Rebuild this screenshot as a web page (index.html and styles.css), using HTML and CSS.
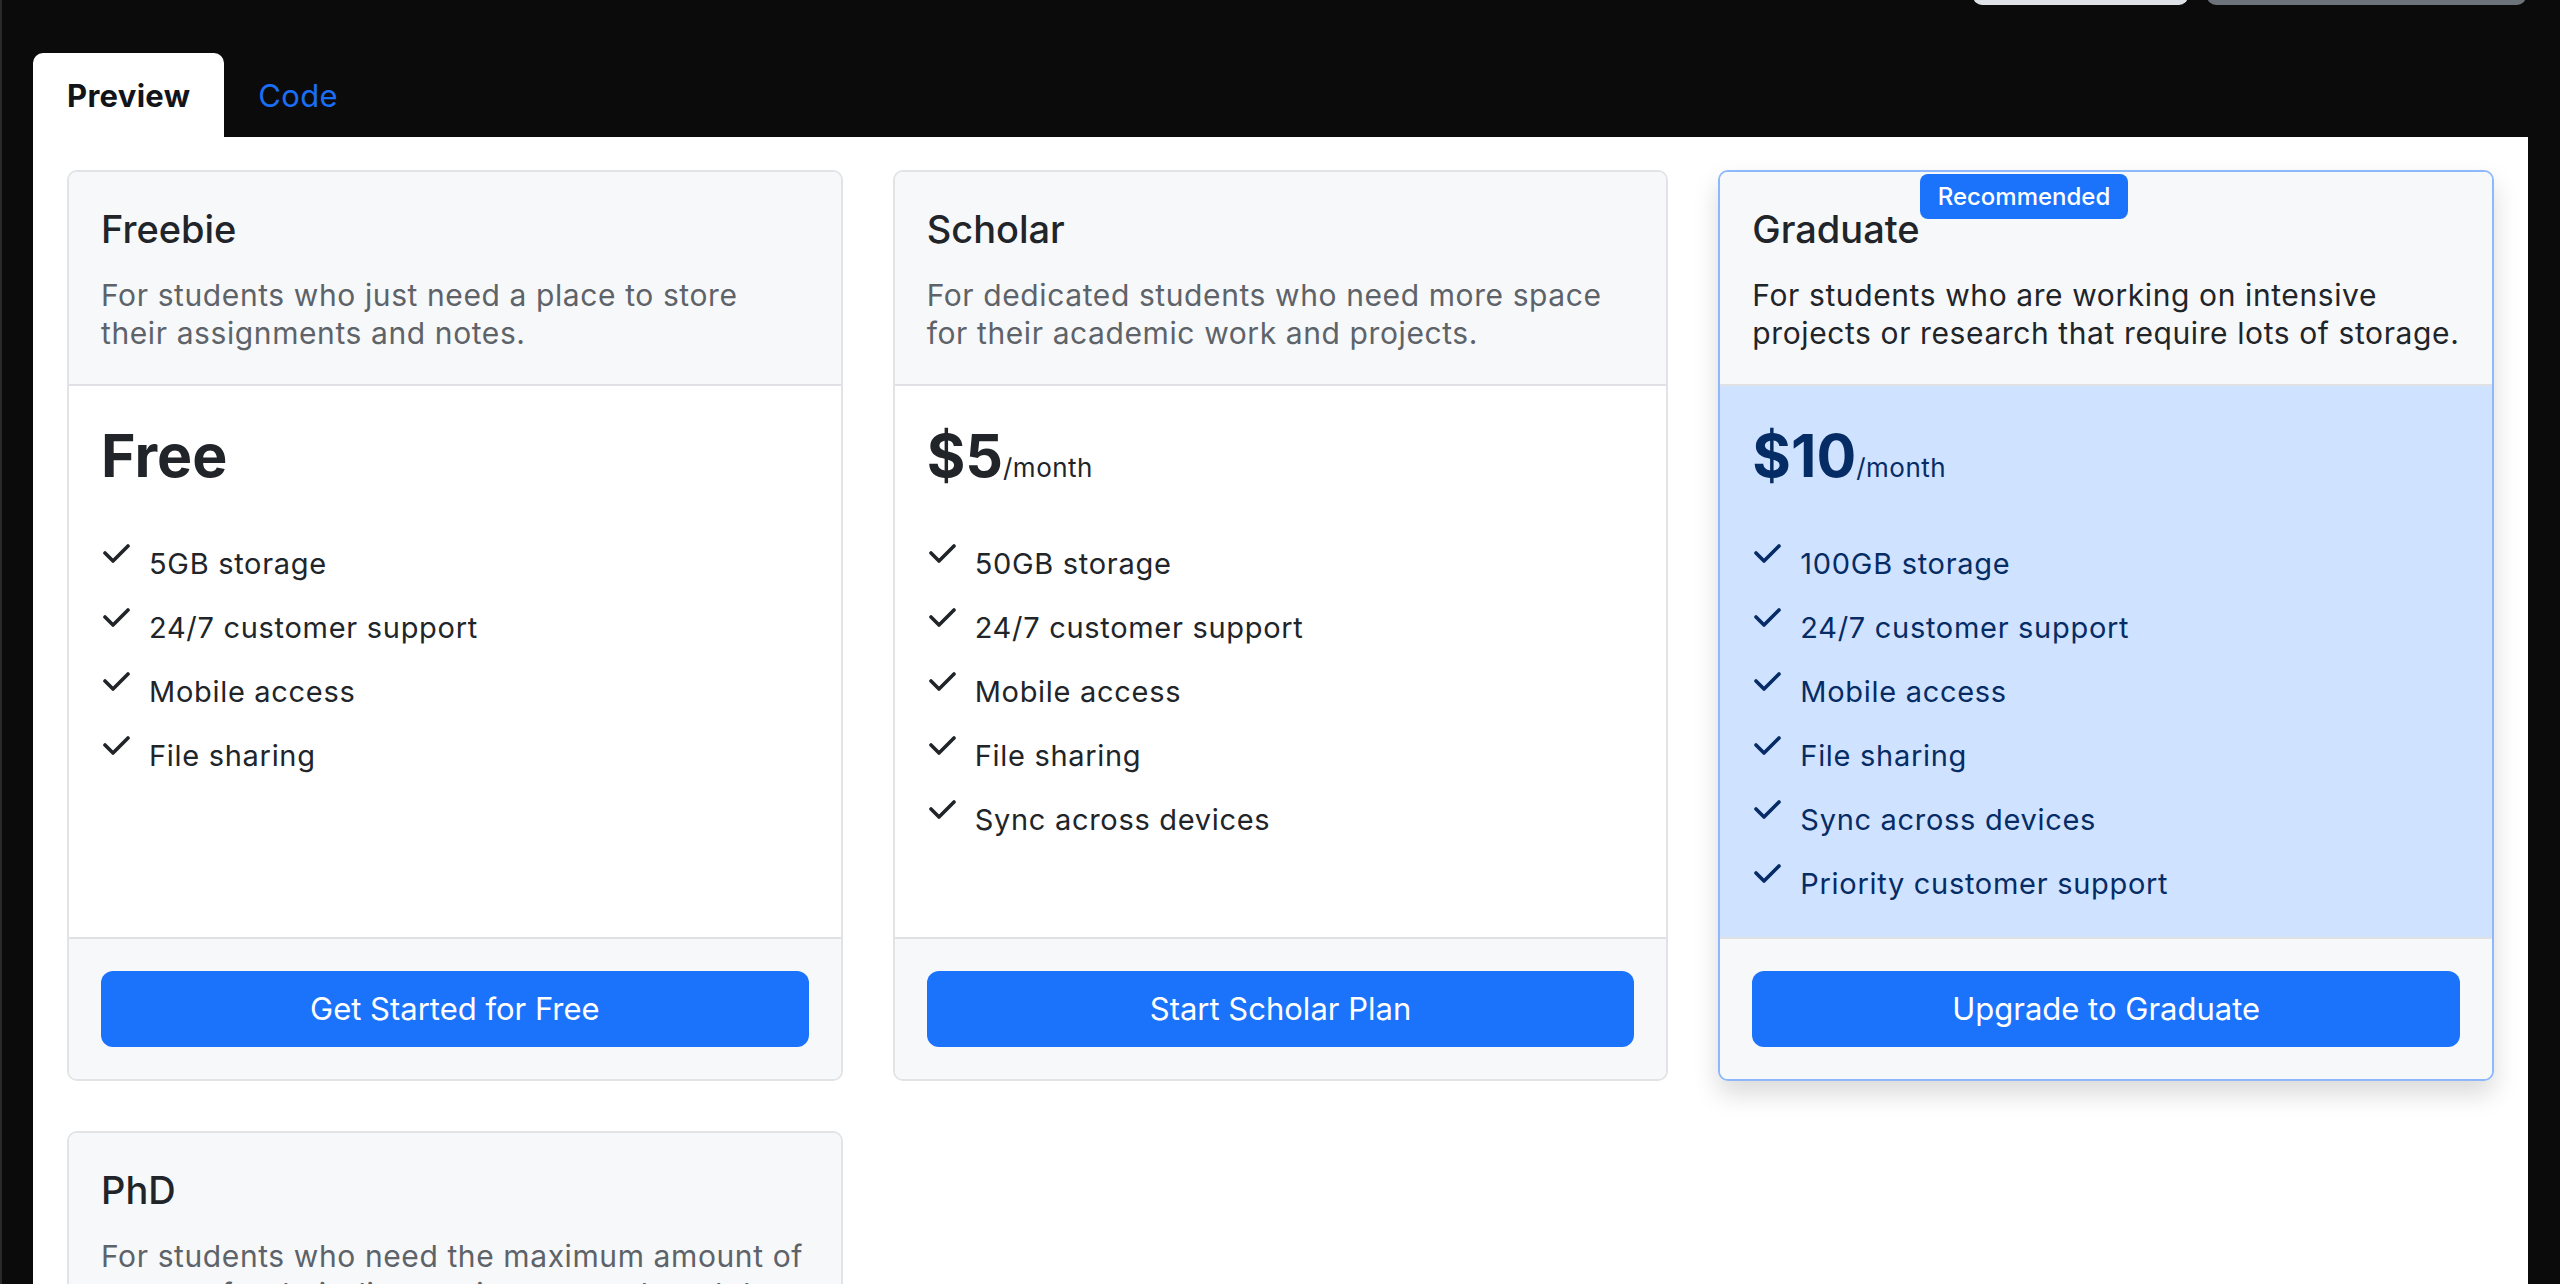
FILE: index.html
```html
<!DOCTYPE html>
<html lang="en">
<head>
<meta charset="utf-8">
<title>Pricing preview</title>
<link rel="stylesheet" href="styles.css">
</head>
<body>
<div class="frame">
  <header class="topbar">
    <div class="toolbar">
      <span class="tool tool-light"></span>
      <span class="tool tool-dark"></span>
    </div>
    <nav class="tabs">
      <span class="tab tab-active">Preview</span>
      <span class="tab tab-link">Code</span>
    </nav>
  </header>
  <main class="panel">
    <div class="grid">
      <section class="card">
        <div class="card-header">
          <h4 class="title">Freebie</h4>
          <p class="desc">For students who just need a place to store<br>their assignments and notes.</p>
        </div>
        <div class="card-body">
          <div class="price"><span class="amount">Free</span></div>
          <ul class="features">
            <li><svg class="check" viewBox="0 0 30 20"><polyline points="4,9 12,17 27,2"/></svg><span>5GB storage</span></li>
            <li><svg class="check" viewBox="0 0 30 20"><polyline points="4,9 12,17 27,2"/></svg><span>24/7 customer support</span></li>
            <li><svg class="check" viewBox="0 0 30 20"><polyline points="4,9 12,17 27,2"/></svg><span>Mobile access</span></li>
            <li><svg class="check" viewBox="0 0 30 20"><polyline points="4,9 12,17 27,2"/></svg><span>File sharing</span></li>
          </ul>
        </div>
        <div class="card-footer"><button class="btn">Get Started for Free</button></div>
      </section>

      <section class="card">
        <div class="card-header">
          <h4 class="title">Scholar</h4>
          <p class="desc">For dedicated students who need more space<br>for their academic work and projects.</p>
        </div>
        <div class="card-body">
          <div class="price"><span class="amount">$5</span><span class="per">/month</span></div>
          <ul class="features">
            <li><svg class="check" viewBox="0 0 30 20"><polyline points="4,9 12,17 27,2"/></svg><span>50GB storage</span></li>
            <li><svg class="check" viewBox="0 0 30 20"><polyline points="4,9 12,17 27,2"/></svg><span>24/7 customer support</span></li>
            <li><svg class="check" viewBox="0 0 30 20"><polyline points="4,9 12,17 27,2"/></svg><span>Mobile access</span></li>
            <li><svg class="check" viewBox="0 0 30 20"><polyline points="4,9 12,17 27,2"/></svg><span>File sharing</span></li>
            <li><svg class="check" viewBox="0 0 30 20"><polyline points="4,9 12,17 27,2"/></svg><span>Sync across devices</span></li>
          </ul>
        </div>
        <div class="card-footer"><button class="btn">Start Scholar Plan</button></div>
      </section>

      <section class="card card-featured">
        <div class="card-header">
          <h4 class="title"><span class="title-text">Graduate<span class="badge">Recommended</span></span></h4>
          <p class="desc">For students who are working on intensive<br>projects or research that require lots of storage.</p>
        </div>
        <div class="card-body">
          <div class="price"><span class="amount">$10</span><span class="per">/month</span></div>
          <ul class="features">
            <li><svg class="check" viewBox="0 0 30 20"><polyline points="4,9 12,17 27,2"/></svg><span>100GB storage</span></li>
            <li><svg class="check" viewBox="0 0 30 20"><polyline points="4,9 12,17 27,2"/></svg><span>24/7 customer support</span></li>
            <li><svg class="check" viewBox="0 0 30 20"><polyline points="4,9 12,17 27,2"/></svg><span>Mobile access</span></li>
            <li><svg class="check" viewBox="0 0 30 20"><polyline points="4,9 12,17 27,2"/></svg><span>File sharing</span></li>
            <li><svg class="check" viewBox="0 0 30 20"><polyline points="4,9 12,17 27,2"/></svg><span>Sync across devices</span></li>
            <li><svg class="check" viewBox="0 0 30 20"><polyline points="4,9 12,17 27,2"/></svg><span>Priority customer support</span></li>
          </ul>
        </div>
        <div class="card-footer"><button class="btn">Upgrade to Graduate</button></div>
      </section>

      <section class="card">
        <div class="card-header">
          <h4 class="title">PhD</h4>
          <p class="desc">For students who need the maximum amount of<br>storage for their dissertation research and data.</p>
        </div>
        <div class="card-body">
          <div class="price"><span class="amount">$20</span><span class="per">/month</span></div>
          <ul class="features">
            <li><svg class="check" viewBox="0 0 30 20"><polyline points="4,9 12,17 27,2"/></svg><span>500GB storage</span></li>
            <li><svg class="check" viewBox="0 0 30 20"><polyline points="4,9 12,17 27,2"/></svg><span>24/7 customer support</span></li>
            <li><svg class="check" viewBox="0 0 30 20"><polyline points="4,9 12,17 27,2"/></svg><span>Mobile access</span></li>
            <li><svg class="check" viewBox="0 0 30 20"><polyline points="4,9 12,17 27,2"/></svg><span>File sharing</span></li>
          </ul>
        </div>
        <div class="card-footer"><button class="btn">Start PhD Plan</button></div>
      </section>
    </div>
  </main>
</div>
</body>
</html>
```

FILE: styles.css
```css
* { box-sizing: border-box; }

html, body {
  margin: 0;
  padding: 0;
  background: #0b0b0b;
}

body {
  font-family: Inter, "Liberation Sans", sans-serif;
  color: #212529;
  height: 1284px;
  overflow: hidden;
}

.frame {
  display: flex;
  flex-direction: column;
  min-height: 1284px;
  border-left: 2px solid #2a2a2a;
}

.topbar {
  display: flex;
  flex-direction: column;
  height: 137px;
  padding-left: 31px;
  padding-right: 32px;
}

.toolbar {
  display: flex;
  justify-content: flex-end;
  gap: 19px;
  height: 5px;
  overflow: hidden;
  padding-right: 2px;
}

.tool {
  display: block;
  height: 40px;
  margin-top: -35px;
  border-radius: 9px;
}

.tool-light { width: 215px; background: #dee1e5; }
.tool-dark { width: 319px; background: #6c737a; }

.tabs {
  display: flex;
  margin-top: 48px;
}

.tab {
  display: block;
  height: 84px;
  padding: 25px 34px 23px;
  font-size: 31px;
  line-height: 36px;
  letter-spacing: 0.3px;
}

.tab-active {
  background: #ffffff;
  color: #111418;
  font-weight: 700;
  border-radius: 10px 10px 0 0;
}

.tab-link {
  color: #1a6ef5;
}

.panel {
  flex: 1;
  background: #ffffff;
  margin-left: 31px;
  margin-right: 32px;
  padding: 33px 34px;
}

.grid {
  display: grid;
  grid-template-columns: repeat(3, 1fr);
  gap: 50px;
}

.card {
  display: flex;
  flex-direction: column;
  border: 2px solid #e1e3e6;
  border-radius: 10px;
  background: #ffffff;
}

.card-header {
  background: #f7f8fa;
  padding: 34px 32px 32px;
  border-bottom: 2px solid #dfe1e4;
  border-radius: 8px 8px 0 0;
}

.title {
  margin: 0 0 24px;
  font-size: 38px;
  line-height: 46px;
  font-weight: 500;
  color: #212529;
}

.title-text {
  position: relative;
  display: inline-block;
}

.badge {
  position: absolute;
  left: 100%;
  top: -32px;
  height: 45px;
  padding: 0 18px;
  background: #1b73fc;
  color: #ffffff;
  font-size: 24px;
  line-height: 45px;
  font-weight: 500;
  border-radius: 8px;
  white-space: nowrap;
}

.desc {
  margin: 0;
  font-size: 30px;
  line-height: 38px;
  letter-spacing: 0.6px;
  color: #5d6369;
  white-space: nowrap;
}

.card-body {
  flex: 1;
  padding: 34px 32px;
}

.price {
  margin: 0 0 54px;
  font-size: 59px;
  line-height: 71px;
  height: 71px;
  white-space: nowrap;
}

.amount {
  font-size: 59px;
  font-weight: 700;
  line-height: 71px;
}

.per {
  font-size: 26px;
  font-weight: 400;
  line-height: 1;
  letter-spacing: 0.5px;
}

.features {
  list-style: none;
  margin: 0;
  padding: 0;
  display: flex;
  flex-direction: column;
  gap: 26px;
}

.features li {
  display: flex;
  align-items: flex-start;
  gap: 18px;
  font-size: 29px;
  line-height: 38px;
  letter-spacing: 0.7px;
}

.check {
  flex: none;
  width: 30px;
  height: 20px;
  margin-top: -1px;
  fill: none;
  stroke: currentColor;
  stroke-width: 3.6;
  stroke-linecap: round;
  stroke-linejoin: round;
}

.card-footer {
  background: #f7f8fa;
  padding: 32px;
  border-top: 2px solid #dfe1e4;
  border-radius: 0 0 8px 8px;
}

.btn {
  display: block;
  width: 100%;
  height: 76px;
  border: 0;
  border-radius: 12px;
  background: #1b73fc;
  color: #ffffff;
  font-family: Inter, "Liberation Sans", sans-serif;
  font-size: 31px;
  line-height: 38px;
  font-weight: 400;
  padding: 0;
}

.card-featured {
  border-color: #8db8fc;
  box-shadow: 0 13px 26px rgba(0, 0, 0, 0.15);
}

.card-featured .desc { color: #212529; }

.card-featured .card-body {
  background: #cfe2ff;
  color: #062c65;
}
```
